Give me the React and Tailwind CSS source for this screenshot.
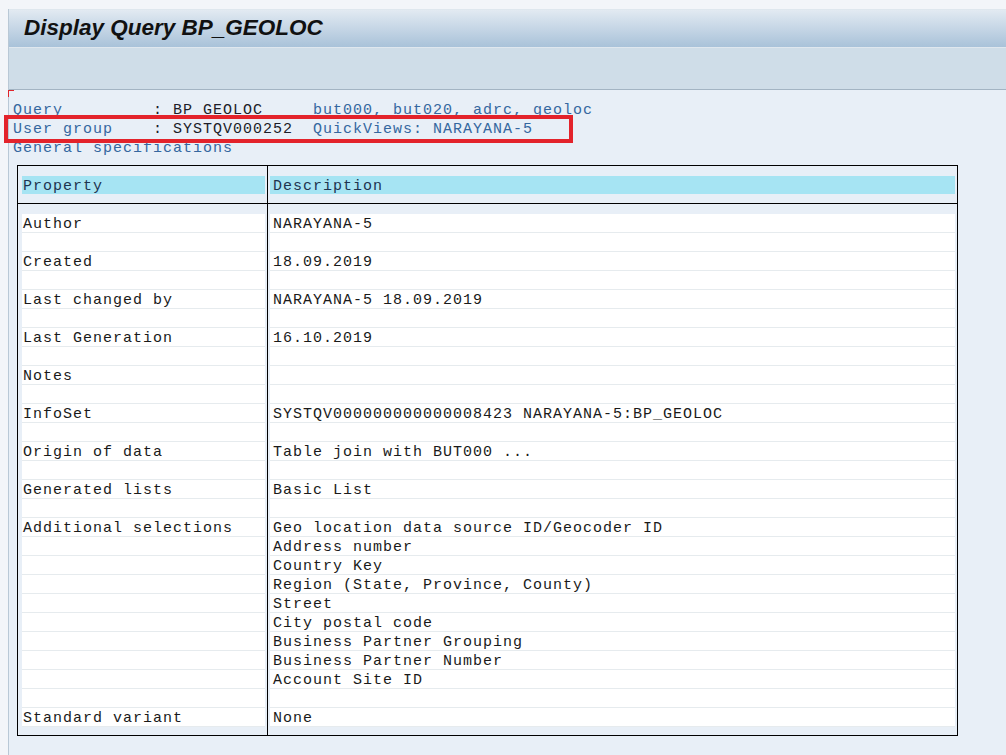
import React from "react";

const mono = { fontFamily: '"Liberation Mono", "Courier New", monospace' };

const rows = [
  ["Author", "NARAYANA-5"],
  ["", ""],
  ["Created", "18.09.2019"],
  ["", ""],
  ["Last changed by", "NARAYANA-5 18.09.2019"],
  ["", ""],
  ["Last Generation", "16.10.2019"],
  ["", ""],
  ["Notes", ""],
  ["", ""],
  ["InfoSet", "SYSTQV000000000000008423 NARAYANA-5:BP_GEOLOC"],
  ["", ""],
  ["Origin of data", "Table join with BUT000 ..."],
  ["", ""],
  ["Generated lists", "Basic List"],
  ["", ""],
  ["Additional selections", "Geo location data source ID/Geocoder ID"],
  ["", "Address number"],
  ["", "Country Key"],
  ["", "Region (State, Province, County)"],
  ["", "Street"],
  ["", "City postal code"],
  ["", "Business Partner Grouping"],
  ["", "Business Partner Number"],
  ["", "Account Site ID"],
  ["", ""],
  ["Standard variant", "None"],
];

function Column({ header, items, first }) {
  return (
    <div
      className={
        first
          ? "flex flex-col w-[250px] border-r border-black"
          : "flex flex-col flex-1"
      }
    >
      <div
        className={
          "h-[38px] border-b border-black pt-[10px] pb-[9px] pr-[2px] " +
          (first ? "pl-[4px]" : "pl-[2px]")
        }
      >
        <div
          className={
            "h-[18px] bg-[#a6e4f3] flex items-center pt-[4px] text-[#1e3450] " +
            (first ? "pl-[1px]" : "pl-[3px]")
          }
        >
          {header}
        </div>
      </div>
      <div
        className={
          "pt-[10px] pb-[8px] pr-[2px] " + (first ? "pl-[4px]" : "pl-[2px]")
        }
      >
        {items.map((t, i) => (
          <div
            key={i}
            className={
              "h-[19px] bg-white border-b border-[#e6ebee] flex items-center pt-[4px] whitespace-pre text-[#1a1a1a] " +
              (first ? "pl-[1px]" : "pl-[3px]")
            }
          >
            {t}
          </div>
        ))}
      </div>
    </div>
  );
}

export default function App() {
  return (
    <div className="relative w-[1006px] h-[755px] bg-[#f3f5f9] pl-[8px] pt-[9px] overflow-hidden">
      <div className="h-full flex flex-col border-l border-[#b9c8d6] bg-[#e8eff7]">
        {/* Title bar */}
        <div
          className="h-[39px] border-t border-[#b5c5d5] bg-gradient-to-b from-[#e2eaf2] to-[#a9c2d9] flex items-center pl-[15px] border-b border-[#dfe7ee]"
          style={{ fontFamily: '"Liberation Sans", Arial, sans-serif' }}
        >
          <span className="text-[22.5px] font-bold italic text-[#111] leading-none pb-[1px]">
            Display Query BP_GEOLOC
          </span>
        </div>
        {/* Toolbar */}
        <div className="h-[42px] bg-[#cfdde8] border-b border-[#a3b4c3]" />
        {/* Content */}
        <div className="relative flex-1 pl-[4px] pt-[10px] text-[15px] tracking-[1px]" style={mono}>
          <div className="absolute left-[-1px] top-0 w-[6px] h-[7px] border-l border-t border-[#e0242c]" />
          <div className="h-[19px] flex items-center pt-[4px] whitespace-pre">
            <span className="text-[#35679f]">Query         </span>
            <span className="text-[#1c1c28]">: BP_GEOLOC     </span>
            <span className="text-[#35679f]">but000, but020, adrc, geoloc</span>
          </div>
          <div className="h-[19px] flex items-center pt-[4px] whitespace-pre">
            <span className="text-[#35679f]">User group    </span>
            <span className="text-[#1c1c28]">: SYSTQV000252  </span>
            <span className="text-[#35679f]">QuickViews: NARAYANA-5</span>
          </div>
          <div className="h-[19px] flex items-center pt-[4px] whitespace-pre text-[#35679f]">
            General specifications
          </div>
          <div className="mt-[8px] ml-[4px] w-[941px] flex border border-black">
            <Column header="Property" items={rows.map((r) => r[0])} first />
            <Column header="Description" items={rows.map((r) => r[1])} />
          </div>
        </div>
      </div>
      {/* Annotation box */}
      <div className="absolute left-[4px] top-[115px] w-[569px] h-[28px] border-4 border-[#e3232b]" />
    </div>
  );
}
